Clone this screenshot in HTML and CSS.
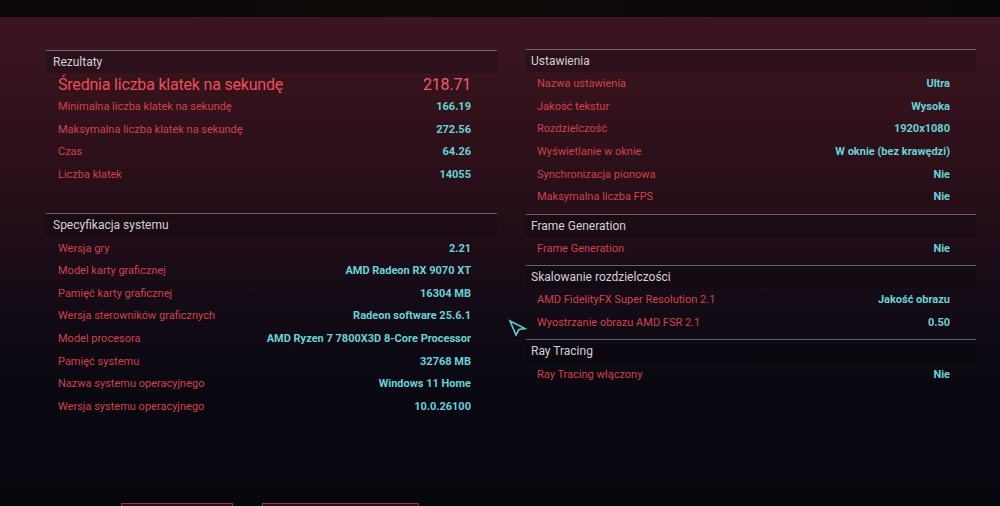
FILE: index.html
```html
<!DOCTYPE html>
<html lang="pl">
<head>
<meta charset="utf-8">
<title>Benchmark</title>
<link rel="stylesheet" href="styles.css">
</head>
<body>
<div class="topbar"></div>
<main class="screen">
  <div class="columns">
    <div class="col col-left">
      <section class="panel">
        <h2 class="panel-title">Rezultaty</h2>
        <div class="row row-big"><span class="label">Średnia liczba klatek na sekundę</span><span class="value">218.71</span></div>
        <div class="row"><span class="label">Minimalna liczba klatek na sekundę</span><span class="value">166.19</span></div>
        <div class="row"><span class="label">Maksymalna liczba klatek na sekundę</span><span class="value">272.56</span></div>
        <div class="row"><span class="label">Czas</span><span class="value">64.26</span></div>
        <div class="row"><span class="label">Liczba klatek</span><span class="value">14055</span></div>
      </section>
      <section class="panel panel-spaced">
        <h2 class="panel-title">Specyfikacja systemu</h2>
        <div class="row"><span class="label">Wersja gry</span><span class="value">2.21</span></div>
        <div class="row"><span class="label">Model karty graficznej</span><span class="value">AMD Radeon RX 9070 XT</span></div>
        <div class="row"><span class="label">Pamięć karty graficznej</span><span class="value">16304 MB</span></div>
        <div class="row"><span class="label">Wersja sterowników graficznych</span><span class="value">Radeon software 25.6.1</span></div>
        <div class="row"><span class="label">Model procesora</span><span class="value">AMD Ryzen 7 7800X3D 8-Core Processor</span></div>
        <div class="row"><span class="label">Pamięć systemu</span><span class="value">32768 MB</span></div>
        <div class="row"><span class="label">Nazwa systemu operacyjnego</span><span class="value">Windows 11 Home</span></div>
        <div class="row"><span class="label">Wersja systemu operacyjnego</span><span class="value">10.0.26100</span></div>
      </section>
    </div>
    <div class="col col-right">
      <section class="panel">
        <h2 class="panel-title">Ustawienia</h2>
        <div class="row"><span class="label">Nazwa ustawienia</span><span class="value">Ultra</span></div>
        <div class="row"><span class="label">Jakość tekstur</span><span class="value">Wysoka</span></div>
        <div class="row"><span class="label">Rozdzielczość</span><span class="value">1920x1080</span></div>
        <div class="row"><span class="label">Wyświetlanie w oknie</span><span class="value">W oknie (bez krawędzi)</span></div>
        <div class="row"><span class="label">Synchronizacja pionowa</span><span class="value">Nie</span></div>
        <div class="row"><span class="label">Maksymalna liczba FPS</span><span class="value">Nie</span></div>
      </section>
      <section class="panel">
        <h2 class="panel-title">Frame Generation</h2>
        <div class="row"><span class="label">Frame Generation</span><span class="value">Nie</span></div>
      </section>
      <section class="panel">
        <h2 class="panel-title">Skalowanie rozdzielczości</h2>
        <div class="row"><span class="label">AMD FidelityFX Super Resolution 2.1</span><span class="value">Jakość obrazu</span></div>
        <div class="row"><span class="label">Wyostrzanie obrazu AMD FSR 2.1</span><span class="value">0.50</span></div>
      </section>
      <section class="panel">
        <h2 class="panel-title">Ray Tracing</h2>
        <div class="row"><span class="label">Ray Tracing włączony</span><span class="value">Nie</span></div>
      </section>
    </div>
  </div>
  <footer class="buttons">
    <div class="btn btn-short"></div>
    <div class="btn btn-long"></div>
  </footer>
</main>
<svg class="cursor" width="20" height="20" viewBox="0 0 20 20" aria-hidden="true">
  <path d="M2 2 L17 9.5 L11 10.5 L8 16 Z" fill="none" stroke="#5fcdd2" stroke-width="1.6" stroke-linejoin="miter"/>
</svg>
</body>
</html>
```

FILE: styles.css
```css
* { box-sizing: border-box; }

html, body {
  margin: 0;
  padding: 0;
}

body {
  width: 1000px;
  height: 506px;
  overflow: hidden;
  position: relative;
  display: flex;
  flex-direction: column;
  background: #05050b;
  font-family: "Liberation Sans Narrow", "Roboto", "Liberation Sans", sans-serif;
}

.topbar {
  height: 17px;
  flex: 0 0 17px;
  background: linear-gradient(90deg, #090807 0%, #0d0c09 40%, #0b0a08 70%, #080707 100%);
}

.screen {
  flex: 1;
  display: flex;
  flex-direction: column;
  background: linear-gradient(180deg, #3b1620 0%, #33121c 18%, #250e18 38%, #140b16 58%, #0a0912 75%, #06060d 100%);
  overflow: hidden;
}

.columns {
  display: flex;
  align-items: flex-start;
  padding-top: 32px;
  padding-left: 46px;
  gap: 29px;
}

.col-left { width: 451px; padding-top: 1px; }
.col-right { width: 450px; }

.panel {
  border-top: 1px solid rgba(150, 175, 190, 0.55);
  padding-bottom: 6px;
}

.panel-spaced { margin-top: 22px; }

.panel-title {
  margin: 0;
  height: 22px;
  line-height: 23px;
  padding-left: 7px;
  font-size: 12px;
  font-weight: normal;
  color: #d3d0d3;
  background: rgba(8, 4, 10, 0.22);
}

.col-right .panel-title { padding-left: 5px; }

.row {
  display: flex;
  justify-content: space-between;
  align-items: center;
  height: 22.6px;
  padding-left: 12px;
  padding-right: 26px;
  font-size: 11px;
  padding-top: 1px;
}

.col-right .row { padding-left: 11px; }

.label {
  color: #d4404a;
}

.value {
  color: #66d3d8;
  font-weight: bold;
}

.row-big {
  height: 22px;
  font-size: 16px;
  letter-spacing: -0.2px;
}

.row-big .label { color: #ef4d57; }
.row-big .value { color: #ee5d66; font-weight: normal; }

.buttons {
  margin-top: auto;
  height: 3px;
  display: flex;
  gap: 29px;
  padding-left: 121px;
}

.btn {
  height: 30px;
  border: 1px solid #8a3a4c;
  background: #2a0f18;
}

.btn-short { width: 112px; }
.btn-long { width: 157px; }

.cursor {
  position: absolute;
  left: 508px;
  top: 319px;
}
```
